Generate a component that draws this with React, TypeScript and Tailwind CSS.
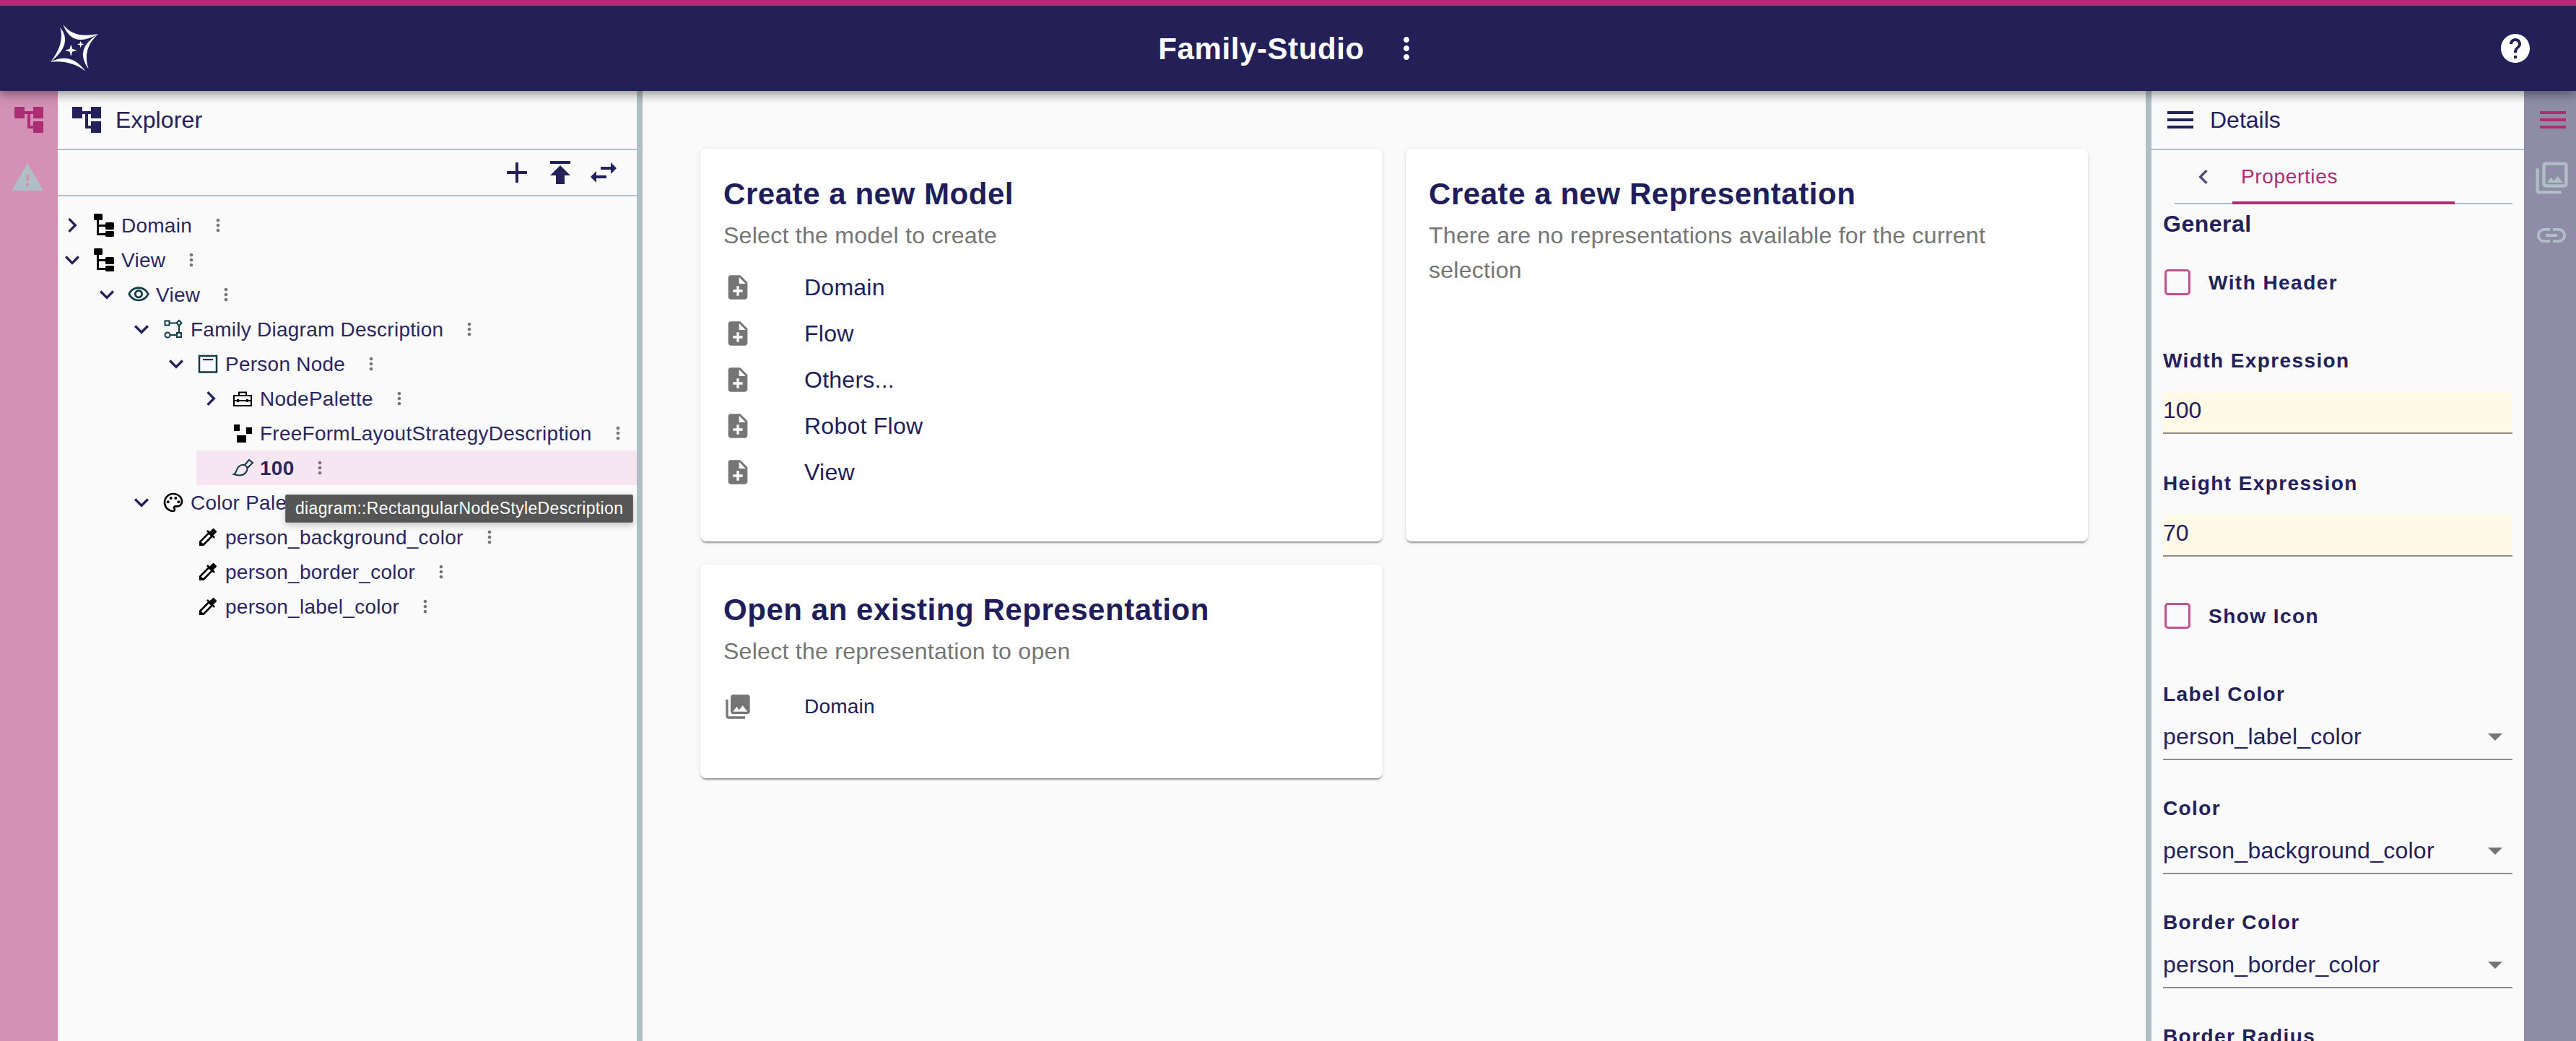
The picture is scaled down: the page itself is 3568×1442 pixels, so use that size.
import type { ReactNode } from "react"

const P = {
	tree: "M22 11V3h-7v3H9V3H2v8h7V8h2v10h4v3h7v-8h-7v3h-2V8h2v3z",
	warning: "M1 21h22L12 2 1 21zm12-3h-2v-2h2v2zm0-4h-2v-4h2v4z",
	add: "M19 13h-6v6h-2v-6H5v-2h6V5h2v6h6v2z",
	publish: "M5 4v2h14V4H5zm0 10h4v6h6v-6h4l-7-7-7 7z",
	swap: "M6.99 11L3 15l3.99 4v-3H14v-2H6.99v-3zM21 9l-3.99-4v3H10v2h7.01v3L21 9z",
	menu: "M3 18h18v-2H3v2zm0-5h18v-2H3v2zm0-7v2h18V6H3z",
	dots: "M12 8c1.1 0 2-.9 2-2s-.9-2-2-2-2 .9-2 2 .9 2 2 2zm0 2c-1.1 0-2 .9-2 2s.9 2 2 2 2-.9 2-2-.9-2-2-2zm0 6c-1.1 0-2 .9-2 2s.9 2 2 2 2-.9 2-2-.9-2-2-2z",
	help: "M12 2C6.48 2 2 6.48 2 12s4.48 10 10 10 10-4.48 10-10S17.52 2 12 2zm1 17h-2v-2h2v2zm2.07-7.75l-.9.92C13.45 12.9 13 13.5 13 15h-2v-.5c0-1.1.45-2.1 1.17-2.83l1.24-1.26c.37-.36.59-.86.59-1.41 0-1.1-.9-2-2-2s-2 .9-2 2H8c0-2.21 1.79-4 4-4s4 1.79 4 4c0 .88-.36 1.68-.93 2.25z",
	photos: "M20 4v12H8V4h12m0-2H8c-1.1 0-2 .9-2 2v12c0 1.1.9 2 2 2h12c1.1 0 2-.9 2-2V4c0-1.1-.9-2-2-2zm-8.5 9.67l1.69 2.26 2.48-3.1L19 15H9zM2 6v14c0 1.1.9 2 2 2h14v-2H4V6H2z",
	photosFilled: "M22 16V4c0-1.1-.9-2-2-2H8c-1.1 0-2 .9-2 2v12c0 1.1.9 2 2 2h12c1.1 0 2-.9 2-2zm-11-4l2.03 2.71L16 11l4 5H8l3-4zM2 6v14c0 1.1.9 2 2 2h14v-2H4V6H2z",
	link: "M3.9 12c0-1.71 1.39-3.1 3.1-3.1h4V7H7c-2.76 0-5 2.24-5 5s2.24 5 5 5h4v-1.9H7c-1.71 0-3.1-1.39-3.1-3.1zM8 13h8v-2H8v2zm9-6h-4v1.9h4c1.71 0 3.1 1.39 3.1 3.1s-1.39 3.1-3.1 3.1h-4V17h4c2.76 0 5-2.24 5-5s-2.24-5-5-5z",
	more: "M16.59 8.59L12 13.17 7.41 8.59 6 10l6 6 6-6z",
	right: "M10 6L8.59 7.41 13.17 12l-4.58 4.59L10 18l6-6z",
	left: "M15.41 7.41L14 6l-6 6 6 6 1.41-1.41L10.83 12z",
	drop: "M7 10l5 5 5-5z",
	noteAdd: "M14 2H6c-1.1 0-1.99.9-1.99 2L4 20c0 1.1.89 2 1.99 2H18c1.1 0 2-.9 2-2V8l-6-6zm2 14h-3v3h-2v-3H8v-2h3v-3h2v3h3v2zm-3-7V3.5L18.5 9H13z",
	eye: "M12 6c3.79 0 7.17 2.13 8.82 5.5C19.17 14.87 15.79 17 12 17s-7.17-2.13-8.82-5.5C4.83 8.13 8.21 6 12 6m0-2C7 4 2.73 7.11 1 11.5 2.73 15.89 7 19 12 19s9.27-3.11 11-7.5C21.27 7.11 17 4 12 4zm0 5c1.38 0 2.5 1.12 2.5 2.5S13.38 14 12 14s-2.5-1.12-2.5-2.5S10.62 9 12 9m0-2c-2.48 0-4.5 2.02-4.5 4.5S9.52 16 12 16s4.5-2.02 4.5-4.5S14.48 7 12 7z",
	palette: "M12 22C6.49 22 2 17.51 2 12S6.49 2 12 2s10 4.04 10 9c0 3.31-2.69 6-6 6h-1.77c-.28 0-.5.22-.5.5 0 .12.05.23.13.33.41.47.64 1.06.64 1.67 0 1.38-1.12 2.5-2.5 2.5zm0-18c-4.41 0-8 3.59-8 8s3.59 8 8 8c.28 0 .5-.22.5-.5 0-.16-.08-.28-.14-.35-.41-.46-.63-1.05-.63-1.65 0-1.38 1.12-2.5 2.5-2.5H16c2.21 0 4-1.79 4-4 0-3.86-3.59-7-8-7z",
	colorize: "M20.71 5.63l-2.34-2.34c-.39-.39-1.02-.39-1.41 0l-3.12 3.12-1.93-1.91-1.41 1.41 1.42 1.42L3 16.25V21h4.75l8.92-8.92 1.42 1.42 1.41-1.41-1.92-1.92 3.12-3.12c.4-.4.4-1.03.01-1.42zM6.92 19L5 17.08l8.06-8.06 1.92 1.92L6.92 19z",
}

const Mat = ({ d, className }: { d: string; className: string }) => (
	<svg viewBox="0 0 24 24" fill="currentColor" className={`shrink-0 ${className}`}>
		<path d={d} />
	</svg>
)

const Logo = () => (
	<svg viewBox="0 0 68 68" fill="#fff" className="ml-[70px] h-[68px] w-[68px]">
		<path d="M17.3 .7Q31.7 21 66 14Q30 35 17.3 .7Z" />
		<path d="M13.3 5Q32 27.8 0 52.7Q20 27.8 13.3 5Z" />
		<path d="M0 52.7Q29 38 48.7 66Q29 50 0 52.7Z" />
		<path d="M66 14Q32 35 52.7 62.7Q43 35 66 14Z" />
		<path d="M28.3 28.700L30.200 34.800 36.500 36.700 30.200 38.600 28.300 45 26.400 38.600 20.100 36.700 26.400 34.800Z" />
		<path d="M41.700 23.500L42.800 27.200 46.500 28.300 42.800 29.400 41.700 33.200 40.600 29.400 36.900 28.300 40.600 27.200Z" />
	</svg>
)

/* tree icons, all on a 32px box */
const Ico = ({ children, className }: { children: ReactNode; className: string }) => (
	<svg viewBox="0 0 32 32" className={`h-8 w-8 shrink-0 ${className}`}>
		{children}
	</svg>
)

const ModelIcon = () => (
	<Ico className="text-black">
		<g fill="currentColor">
			<rect x="2" y="0" width="12" height="9" rx="1.5" />
			<rect x="18" y="12" width="12" height="10" rx="1.5" />
			<rect x="18" y="24" width="12" height="8" rx="1.5" />
			<path d="M6 9h3v6h9v3H9v9h9v3H6z" />
		</g>
	</Ico>
)
const EyeIcon = () => <Mat d={P.eye} className="h-8 w-8 text-[#0f3a46]" />
const DiagramIcon = () => (
	<Ico className="text-[#0f3a46]">
		<g fill="none" stroke="currentColor" strokeWidth="2">
			<rect x="4.5" y="4.5" width="6" height="6" />
			<path d="M10.500 7.500H20M24 11.500V21M11.500 24H21" />
			<path d="M24 4l3.500 3.500L24 11l-3.500-3.500z" />
			<circle cx="8" cy="24" r="3.500" />
			<rect x="21" y="21" width="6" height="6" />
		</g>
	</Ico>
)
const NodeIcon = () => (
	<Ico className="text-[#0f3a46]">
		<rect x="4" y="5" width="24" height="22.500" fill="none" stroke="currentColor" strokeWidth="2.500" />
		<rect x="9" y="9" width="14" height="2.200" fill="currentColor" />
	</Ico>
)
const ToolIcon = () => (
	<Ico className="text-black">
		<g fill="none" stroke="currentColor" strokeWidth="2">
			<rect x="4" y="12" width="24" height="14" />
			<path d="M11 12V7.500h10V12M4 19h24" />
		</g>
		<rect x="8" y="17" width="3" height="4" fill="currentColor" />
		<rect x="21" y="17" width="3" height="4" fill="currentColor" />
	</Ico>
)
const LayoutIcon = () => (
	<Ico className="text-black">
		<rect x="4" y="4" width="8" height="9" fill="currentColor" />
		<rect x="21" y="8" width="8" height="9" fill="currentColor" />
		<rect x="8" y="19" width="13" height="10" fill="currentColor" />
	</Ico>
)
const StyleIcon = () => (
	<Ico className="text-[#0f3a46]">
		<g fill="none" stroke="currentColor" strokeWidth="2">
			<path d="M4 25C7 24 7 19 10 15C13 12 17 11 20 13L22 15C24 19 20 25 15 26C11 27 7 26 4 25Z" />
			<path d="M19 12L25 5L30 9L23 16" />
		</g>
	</Ico>
)
const PaletteIcon = () => (
	<svg viewBox="0 0 24 24" fill="#000" className="h-8 w-8 shrink-0">
		<path d={P.palette} />
		<circle cx="6.500" cy="11.500" r="1.500" />
		<circle cx="9.500" cy="7.500" r="1.500" />
		<circle cx="14.500" cy="7.500" r="1.500" />
		<circle cx="17.500" cy="11.500" r="1.500" />
	</svg>
)
const PickerIcon = () => <Mat d={P.colorize} className="h-8 w-8 text-black" />

type Row = { level: number; label: string; icon: ReactNode; open?: boolean; selected?: boolean }

const rows: Row[] = [
	{ level: 0, label: "Domain", icon: <ModelIcon />, open: false },
	{ level: 0, label: "View", icon: <ModelIcon />, open: true },
	{ level: 1, label: "View", icon: <EyeIcon />, open: true },
	{ level: 2, label: "Family Diagram Description", icon: <DiagramIcon />, open: true },
	{ level: 3, label: "Person Node", icon: <NodeIcon />, open: true },
	{ level: 4, label: "NodePalette", icon: <ToolIcon />, open: false },
	{ level: 4, label: "FreeFormLayoutStrategyDescription", icon: <LayoutIcon /> },
	{ level: 4, label: "100", icon: <StyleIcon />, selected: true },
	{ level: 2, label: "Color Palette", icon: <PaletteIcon />, open: true },
	{ level: 3, label: "person_background_color", icon: <PickerIcon /> },
	{ level: 3, label: "person_border_color", icon: <PickerIcon /> },
	{ level: 3, label: "person_label_color", icon: <PickerIcon /> },
]

const TreeRow = ({ row }: { row: Row }) => (
	<div
		className={`relative flex h-12 items-center ${row.selected ? "bg-[#f6e6f1]" : ""}`}
		style={{ marginLeft: row.level * 48 }}
	>
		<div className="flex w-10 shrink-0 items-center justify-center">
			{row.open !== undefined && (
				<Mat d={row.open ? P.more : P.right} className="h-10 w-10 text-[#24205a]" />
			)}
		</div>
		<div className="ml-2">{row.icon}</div>
		<span
			className={`ml-2 whitespace-nowrap pt-px text-[28px] tracking-[0.25px] text-[#2b2660] ${row.selected ? "font-bold" : ""}`}
		>
			{row.label}
		</span>
		<Mat d={P.dots} className="ml-[22px] h-7 w-7 text-[#757575]" />
		{row.selected && (
			<div className="absolute left-[123px] top-[61px] z-10 flex h-[39px] w-[482px] items-center whitespace-nowrap rounded-[2px] border border-[#6b6b6b] bg-[#555555] pl-[13px] text-[23px] tracking-[0.33px] text-white shadow-[0_4px_10px_rgba(0,0,0,0.2)]">
				diagram::RectangularNodeStyleDescription
			</div>
		)}
	</div>
)

const Card = ({ title, children }: { title: string; children: ReactNode }) => (
	<div className="rounded-lg bg-white px-8 pt-8 shadow-[0_4px_2px_-2px_rgba(0,0,0,0.25),0_2px_2px_0_rgba(0,0,0,0.14),0_1px_6px_0_rgba(0,0,0,0.1)]">
		<h2 className="mb-[2px] text-[42px] font-bold leading-[62px] tracking-[0.55px] text-[#211d5a]">{title}</h2>
		{children}
	</div>
)

const Sub = ({ children }: { children: ReactNode }) => (
	<p className="text-[32px] leading-[48px] tracking-[0.28px] text-[#757575]">{children}</p>
)

const ModelRow = ({ label }: { label: string }) => (
	<div className="flex h-16 items-center">
		<Mat d={P.noteAdd} className="h-10 w-10 text-[#757575]" />
		<span className="ml-[72px] text-[32px] tracking-[0.25px] text-[#211d5a]">{label}</span>
	</div>
)

const FieldLabel = ({ children }: { children: ReactNode }) => (
	<div className="flex h-10 items-center pt-[2px] text-[28px] font-bold tracking-[1.4px] text-[#24205a]">{children}</div>
)

const Check = ({ label, className }: { label: string; className: string }) => (
	<div className={`flex h-9 items-center ${className}`}>
		<div className="ml-[2px] h-9 w-9 rounded-[5px] border-[3.5px] border-[#c0528f]" />
		<span className="ml-[25px] pt-[2px] text-[28px] font-bold tracking-[1.45px] text-[#24205a]">{label}</span>
	</div>
)

const TextField = ({ value }: { value: string }) => (
	<div className="mt-6 flex h-[58px] items-center border-b-2 border-[#938e7f] bg-[#fff9e8] pb-[6px] text-[32px] leading-none text-[#24205a]">
		{value}
	</div>
)

const SelectField = ({ value }: { value: string }) => (
	<div className="mt-2 flex h-16 items-center justify-between border-b-2 border-[#8c8c8c] text-[32px] tracking-[0.25px] text-[#24205a]">
		<span>{value}</span>
		<Mat d={P.drop} className="h-12 w-12 text-[#757575]" />
	</div>
)

export default function App() {
	return (
		<div className="flex h-[1442px] w-[3568px] flex-col overflow-hidden bg-[#fafafa] [font-family:'Liberation_Sans',Arial,sans-serif]">
			{/* HEADER */}
			<header className="relative z-20 grid h-[126px] shrink-0 grid-cols-3 items-center border-t-8 border-[#ab2e75] bg-[#242057] text-white shadow-[0_4px_14px_rgba(0,0,0,0.45)]">
				<Logo />
				<div className="ml-2 flex items-center justify-center">
					<span className="text-[42px] font-bold tracking-[0.6px]">Family-Studio</span>
					<Mat d={P.dots} className="ml-[34px] h-12 w-12" />
				</div>
				<div className="flex justify-end pr-[60px]">
					<Mat d={P.help} className="h-12 w-12" />
				</div>
			</header>

			<div className="flex min-h-0 flex-1">
				{/* LEFT RAIL */}
				<div className="flex w-20 shrink-0 flex-col bg-[#d391b5] pt-4">
					<Mat d={P.tree} className="ml-4 h-12 w-12 text-[#ab2e75]" />
					<Mat d={P.warning} className="ml-[14px] mt-8 h-12 w-12 text-[#b0bec5]" />
				</div>

				{/* EXPLORER */}
				<div className="flex w-[802px] shrink-0 flex-col">
					<div className="flex h-20 shrink-0 items-center pl-4">
						<Mat d={P.tree} className="h-12 w-12 text-[#24205a]" />
						<span className="ml-4 text-[32px] tracking-[0.15px] text-[#24205a]">Explorer</span>
					</div>
					<div className="h-[2px] shrink-0 bg-[#b0bec5]" />
					<div className="flex h-[62px] shrink-0 items-center justify-end gap-3 pr-[22px] text-[#24205a]">
						<Mat d={P.add} className="h-12 w-12" />
						<Mat d={P.publish} className="h-12 w-12" />
						<Mat d={P.swap} className="h-12 w-12" />
					</div>
					<div className="h-[2px] shrink-0 bg-[#b0bec5]" />
					<div className="pt-4">
						{rows.map((r, i) => (
							<TreeRow key={i} row={r} />
						))}
					</div>
				</div>
				<div className="w-2 shrink-0 bg-[#b0bec5]" />

				{/* ONBOARD AREA */}
				<div className="grid flex-1 grid-cols-2 grid-rows-[544px_296px] content-start gap-8 px-20 pt-20">
					<Card title="Create a new Model">
						<Sub>Select the model to create</Sub>
						<div className="mt-4">
							{["Domain", "Flow", "Others...", "Robot Flow", "View"].map((m) => (
								<ModelRow key={m} label={m} />
							))}
						</div>
					</Card>
					<Card title="Create a new Representation">
						<Sub>There are no representations available for the current selection</Sub>
					</Card>
					<Card title="Open an existing Representation">
						<Sub>Select the representation to open</Sub>
						<div className="mt-[21px] flex h-16 items-center">
							<Mat d={P.photosFilled} className="h-10 w-10 text-[#757575]" />
							<span className="ml-[72px] text-[28px] tracking-[0.2px] text-[#211d5a]">Domain</span>
						</div>
					</Card>
				</div>

				<div className="w-2 shrink-0 bg-[#b0bec5]" />

				{/* DETAILS */}
				<div className="flex w-[516px] shrink-0 flex-col">
					<div className="flex h-20 shrink-0 items-center pl-4">
						<Mat d={P.menu} className="h-12 w-12 text-[#24205a]" />
						<span className="ml-[17px] text-[32px] text-[#24205a]">Details</span>
					</div>
					<div className="h-[2px] shrink-0 bg-[#b0bec5]" />
					<div className="mx-4 shrink-0 pl-4">
						<div className="flex h-[75px] border-b-2 border-[#b0bec5]">
							<div className="flex w-20 items-center justify-center">
								<Mat d={P.left} className="h-10 w-10 text-[#4e4b78]" />
							</div>
							<div className="flex h-[75px] w-[308px] items-center border-b-4 border-[#ab2e75] pl-3 pt-[2px] text-[28px] tracking-[0.65px] text-[#ab2e75]">
								Properties
							</div>
						</div>
					</div>
					<div className="flex-1 overflow-hidden px-4">
						<div className="flex h-[54px] items-center text-[32px] font-bold tracking-[0.5px] text-[#24205a]">
							General
						</div>
						<Check label="With Header" className="mt-9" />
						<div className="mt-[70px]">
							<FieldLabel>Width Expression</FieldLabel>
							<TextField value="100" />
						</div>
						<div className="mt-12">
							<FieldLabel>Height Expression</FieldLabel>
							<TextField value="70" />
						</div>
						<Check label="Show Icon" className="mt-16" />
						<div className="mt-[70px]">
							<FieldLabel>Label Color</FieldLabel>
							<SelectField value="person_label_color" />
						</div>
						<div className="mt-[46px]">
							<FieldLabel>Color</FieldLabel>
							<SelectField value="person_background_color" />
						</div>
						<div className="mt-[46px]">
							<FieldLabel>Border Color</FieldLabel>
							<SelectField value="person_border_color" />
						</div>
						<div className="mt-[46px]">
							<FieldLabel>Border Radius</FieldLabel>
						</div>
					</div>
				</div>

				{/* RIGHT RAIL */}
				<div className="flex w-[72px] shrink-0 flex-col bg-[#8f8ca8] pl-4 pt-4">
					<Mat d={P.menu} className="h-12 w-12 text-[#ab2e75]" />
					<Mat d={P.photos} className="-ml-1 mt-[30px] h-[53px] w-[53px] text-[#b0bec5]" />
					<Mat d={P.link} className="-ml-[2px] mt-[29px] h-12 w-12 text-[#b0bec5]" />
				</div>
			</div>
		</div>
	)
}
